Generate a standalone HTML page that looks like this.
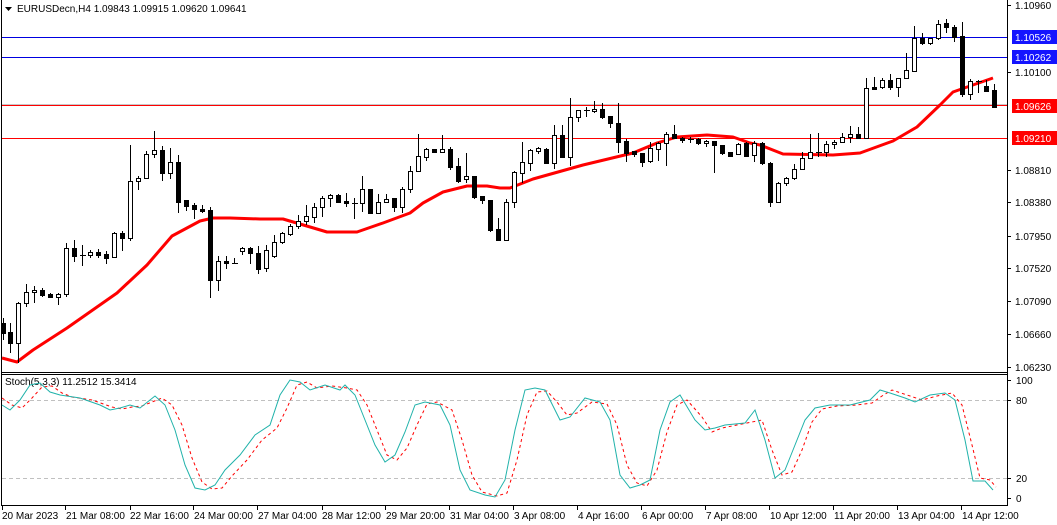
<!DOCTYPE html>
<html><head><meta charset="utf-8"><style>
html,body{margin:0;padding:0;background:#fff;width:1057px;height:525px;overflow:hidden}
svg{display:block}
text{font-family:"Liberation Sans",sans-serif;font-size:10px;fill:#000}
</style></head><body>
<svg width="1057" height="525" viewBox="0 0 1057 525" xmlns="http://www.w3.org/2000/svg">
<rect width="1057" height="525" fill="#fff"/>
<!-- horizontal levels -->
<g shape-rendering="crispEdges">
<line x1="1" y1="37.5" x2="1007" y2="37.5" stroke="#0000e0" stroke-width="1"/>
<line x1="1" y1="57.5" x2="1007" y2="57.5" stroke="#0000e0" stroke-width="1"/>
<line x1="1" y1="104.5" x2="1007" y2="104.5" stroke="#c8c8c8" stroke-width="1"/>
<line x1="1" y1="105.5" x2="1007" y2="105.5" stroke="#ff0000" stroke-width="1"/>
<line x1="1" y1="138.5" x2="1007" y2="138.5" stroke="#ff0000" stroke-width="1"/>
<!-- frame -->
<path d="M1.5 0V505.5H1007.5V0M1 372.5H1007M1 374.5H1007" stroke="#000" fill="none"/>
</g>
<!-- MA -->
<polyline fill="none" stroke="#ff0000" stroke-width="3" stroke-linejoin="round" points="2,358 17,362 33,350 67,328 117,293 147,265 172,236 200,221 213,218 230,218 260,219 283,219 300,224 327,232 357,232 383,223 410,213 423,203 443,192 467,186 487,186 500,188 510,188 533,179 583,165 633,153 657,143 677,137 707,135 733,137 750,143 760,145 783,154 833,155 860,153 893,141 917,127 940,105 953,92 970,86 993,78"/>
<g shape-rendering="crispEdges">
<!-- candles wicks -->
<path stroke="#000" stroke-width="1" fill="none" d="M3.5 318V340M10.5 323V353M18.5 302V363M26.5 284V307M34.5 286V303M42.5 288V297M50.5 293V298M58.5 293V305M66.5 243V297M74.5 240V262M82.5 245V266M90.5 250V258M98.5 249V258M106.5 251V264M114.5 232V258M122.5 231V251M130.5 145V241M138.5 176V190M146.5 151V179M154.5 131V158M162.5 146V181M170.5 148V179M178.5 155V213M186.5 200V211M194.5 203V219M202.5 205V213M210.5 207V298M218.5 256V291M226.5 256V269M234.5 258V263M242.5 247V255M250.5 247V264M258.5 246V274M266.5 245V272M274.5 235V258M282.5 232V244M290.5 224V236M298.5 215V229M306.5 205V225M314.5 203V223M322.5 196V217M330.5 194V207M338.5 194V203M346.5 193V207M354.5 198V219M362.5 176V212M370.5 189V213M378.5 194V213M386.5 194V203M394.5 198V212M402.5 187V213M410.5 166V193M418.5 134V171M426.5 148V161M434.5 149V153M442.5 135V153M450.5 147V170M458.5 158V183M466.5 153V183M474.5 176V199M482.5 196V204M490.5 200V232M498.5 218V241M506.5 199V241M514.5 171V208M522.5 142V183M530.5 149V171M538.5 147V154M546.5 148V164M554.5 125V169M562.5 125V158M570.5 98V166M578.5 110V122M586.5 107V117M594.5 101V113M602.5 103V119M610.5 116V128M618.5 103V153M626.5 139V162M634.5 151V157M642.5 153V167M650.5 142V163M658.5 142V161M666.5 132V166M674.5 125V139M682.5 137V143M690.5 137V143M698.5 138V145M706.5 140V147M714.5 141V173M722.5 145V155M730.5 152V157M738.5 143V155M746.5 142V157M754.5 141V162M762.5 142V165M770.5 162V207M778.5 182V203M786.5 177V186M794.5 164V180M802.5 152V170M810.5 134V159M818.5 133V157M826.5 141V157M834.5 140V149M842.5 133V143M850.5 126V143M858.5 127V139M866.5 78V139M874.5 77V90M882.5 78V89M890.5 74V90M898.5 78V97M906.5 53V79M914.5 26V72M922.5 33V45M930.5 38V45M938.5 20V40M946.5 19V33M954.5 25V42M962.5 22V97M970.5 79V100M978.5 80V93M986.5 80V92M994.5 84V107"/>
<!-- black bodies -->
<path stroke="#000" fill="#000" d="M1.5 323.5h4v10h-4zM8.5 332.5h4v11h-4zM40.5 290.5h4v5h-4zM48.5 294.5h4v3h-4zM72.5 248.5h4v8h-4zM96.5 252.5h4v3h-4zM104.5 254.5h4v4h-4zM120.5 233.5h4v5h-4zM160.5 150.5h4v23h-4zM176.5 162.5h4v40h-4zM184.5 200.5h4v6h-4zM192.5 205.5h4v4h-4zM200.5 209.5h4v2h-4zM208.5 210.5h4v70h-4zM224.5 261.5h4v2h-4zM248.5 248.5h4v5h-4zM256.5 253.5h4v16h-4zM336.5 195.5h4v7h-4zM344.5 201.5h4v2h-4zM368.5 189.5h4v24h-4zM392.5 198.5h4v9h-4zM432.5 149.5h4v3h-4zM448.5 149.5h4v18h-4zM456.5 166.5h4v15h-4zM472.5 176.5h4v21h-4zM480.5 196.5h4v4h-4zM488.5 200.5h4v30h-4zM496.5 229.5h4v11h-4zM544.5 149.5h4v14h-4zM560.5 135.5h4v22h-4zM600.5 109.5h4v8h-4zM608.5 116.5h4v7h-4zM616.5 123.5h4v19h-4zM624.5 141.5h4v12h-4zM632.5 151.5h4v3h-4zM640.5 153.5h4v9h-4zM672.5 134.5h4v4h-4zM680.5 138.5h4v2h-4zM696.5 139.5h4v4h-4zM712.5 141.5h4v4h-4zM720.5 145.5h4v8h-4zM728.5 152.5h4v4h-4zM744.5 143.5h4v13h-4zM760.5 143.5h4v20h-4zM768.5 163.5h4v39h-4zM856.5 134.5h4v4h-4zM872.5 87.5h4v2h-4zM888.5 80.5h4v7h-4zM920.5 38.5h4v5h-4zM944.5 23.5h4v4h-4zM952.5 27.5h4v10h-4zM960.5 36.5h4v58h-4zM984.5 86.5h4v5h-4zM992.5 90.5h4v17h-4z"/>
<!-- white bodies -->
<path stroke="#000" fill="#fff" d="M16.5 303.5h4v40h-4zM24.5 292.5h4v11h-4zM32.5 290.5h4v2h-4zM56.5 294.5h4v3h-4zM64.5 248.5h4v46h-4zM88.5 252.5h4v3h-4zM112.5 233.5h4v24h-4zM128.5 181.5h4v57h-4zM136.5 178.5h4v3h-4zM144.5 154.5h4v24h-4zM152.5 150.5h4v4h-4zM168.5 162.5h4v11h-4zM216.5 261.5h4v19h-4zM240.5 248.5h4v3h-4zM264.5 250.5h4v18h-4zM272.5 242.5h4v14h-4zM280.5 233.5h4v9h-4zM288.5 226.5h4v8h-4zM296.5 221.5h4v5h-4zM304.5 216.5h4v5h-4zM312.5 207.5h4v10h-4zM320.5 198.5h4v9h-4zM328.5 195.5h4v3h-4zM360.5 189.5h4v14h-4zM376.5 202.5h4v11h-4zM384.5 199.5h4v3h-4zM400.5 189.5h4v18h-4zM408.5 171.5h4v18h-4zM416.5 156.5h4v15h-4zM424.5 149.5h4v8h-4zM440.5 149.5h4v3h-4zM464.5 176.5h4v3h-4zM504.5 202.5h4v38h-4zM512.5 172.5h4v30h-4zM520.5 162.5h4v11h-4zM528.5 150.5h4v13h-4zM536.5 148.5h4v3h-4zM552.5 135.5h4v28h-4zM568.5 117.5h4v40h-4zM576.5 110.5h4v7h-4zM592.5 109.5h4v2h-4zM648.5 148.5h4v13h-4zM656.5 143.5h4v6h-4zM664.5 134.5h4v9h-4zM704.5 141.5h4v2h-4zM736.5 144.5h4v10h-4zM752.5 143.5h4v12h-4zM776.5 183.5h4v19h-4zM784.5 178.5h4v5h-4zM792.5 169.5h4v9h-4zM800.5 158.5h4v11h-4zM808.5 152.5h4v6h-4zM824.5 144.5h4v8h-4zM832.5 142.5h4v2h-4zM840.5 137.5h4v5h-4zM848.5 134.5h4v3h-4zM864.5 88.5h4v50h-4zM880.5 80.5h4v7h-4zM896.5 78.5h4v9h-4zM904.5 70.5h4v8h-4zM912.5 38.5h4v33h-4zM928.5 38.5h4v5h-4zM936.5 24.5h4v14h-4zM968.5 81.5h4v13h-4z"/>
<!-- dojis -->
<path stroke="#000" d="M80 255.5h6M232 263.5h6M352 203.5h6M584 110.5h6M688 139.5h6M816 152.5h6M976 81.5h6"/>
</g>
<!-- header -->
<path d="M5 7h7l-3.5 4z" fill="#000"/>
<text x="17" y="12">EURUSDecn,H4  1.09843 1.09915 1.09620 1.09641</text>
<!-- right axis -->
<g stroke="#000" shape-rendering="crispEdges"><path d="M1007 5.5h4M1007 72.5h4M1007 170.5h4M1007 202.5h4M1007 236.5h4M1007 268.5h4M1007 301.5h4M1007 334.5h4M1007 367.5h4M1007 380.5h4M1007 400.5h4M1007 478.5h4M1007 498.5h4"/></g>
<text x="1015" y="9">1.10960</text>
<rect x="1012" y="30" width="45" height="14" fill="#1414ff"/>
<text x="1015" y="41" style="fill:#fff">1.10526</text>
<rect x="1012" y="50" width="45" height="14" fill="#1414ff"/>
<text x="1015" y="61" style="fill:#fff">1.10262</text>
<text x="1015" y="76">1.10100</text>
<rect x="1012" y="99" width="45" height="14" fill="#ff0000"/>
<text x="1015" y="110" style="fill:#fff">1.09626</text>
<rect x="1012" y="131" width="45" height="14" fill="#ff0000"/>
<text x="1015" y="142" style="fill:#fff">1.09210</text>
<text x="1015" y="174">1.08810</text>
<text x="1015" y="206">1.08380</text>
<text x="1015" y="240">1.07950</text>
<text x="1015" y="272">1.07520</text>
<text x="1015" y="305">1.07090</text>
<text x="1015" y="338">1.06660</text>
<text x="1015" y="371">1.06230</text>
<!-- stoch -->
<text x="5" y="385">Stoch(5,3,3) 11.2512 15.3414</text>
<path d="M2 400.5H1007M2 478.5H1007" stroke="#c0c0c0" stroke-dasharray="4,3" shape-rendering="crispEdges"/>
<text x="1016" y="384">100</text>
<text x="1016" y="404">80</text>
<text x="1016" y="482">20</text>
<text x="1016" y="502">0</text>
<polyline fill="none" stroke="#ff0000" stroke-dasharray="3,3" points="2,398 12,405 22,408 32,398 42,387 52,386 62,393 72,397 92,400 112,407 122,409 132,407 142,406 152,402 162,398 172,405 182,425 192,458 202,482 212,489 222,488 232,476 247,460 262,440 277,428 287,408 297,385 307,382 317,388 332,386 347,388 357,390 367,405 377,430 387,455 397,460 407,448 417,425 427,404 437,402 452,410 462,440 472,475 482,492 497,496 507,493 517,460 527,415 537,392 547,391 557,402 567,415 577,413 592,402 607,404 617,425 627,465 637,483 647,486 657,470 667,432 677,405 687,400 702,417 712,432 722,428 737,425 752,422 762,420 772,450 782,475 792,472 802,450 812,422 822,409 837,406 857,405 872,403 882,396 892,390 907,395 922,400 937,396 952,393 962,405 972,445 980,478 990,480 996,487"/>
<polyline fill="none" stroke="#20b2aa" stroke-width="1" points="2,405 10,410 20,400 30,385 40,383 50,392 60,395 80,398 100,405 110,410 120,408 130,405 140,408 155,396 165,405 175,430 185,465 195,488 205,490 215,485 225,470 240,455 255,435 270,425 280,395 290,380 300,382 310,390 325,385 340,390 345,385 355,395 365,420 375,445 385,462 395,455 405,432 415,405 425,402 440,405 450,425 460,470 470,490 485,495 495,497 505,480 515,430 525,390 535,388 545,390 560,420 570,417 585,398 600,402 610,420 620,475 630,488 640,485 650,480 660,430 670,402 680,395 695,420 705,430 715,428 725,425 745,423 755,410 765,440 775,478 785,470 795,445 805,420 815,408 830,405 850,405 870,400 880,390 890,393 905,398 915,402 930,395 945,393 955,400 965,440 973,481 985,481 993,490"/>
<!-- bottom axis -->
<path stroke="#000" shape-rendering="crispEdges" d="M2.5 505V510M65.5 505V510M130.5 505V510M193.5 505V510M257.5 505V510M322.5 505V510M385.5 505V510M449.5 505V510M513.5 505V510M577.5 505V510M641.5 505V510M705.5 505V510M769.5 505V510M833.5 505V510M897.5 505V510M961.5 505V510"/>
<text x="2" y="519">20 Mar 2023</text>
<text x="66" y="519">21 Mar 08:00</text>
<text x="130" y="519">22 Mar 16:00</text>
<text x="194" y="519">24 Mar 00:00</text>
<text x="258" y="519">27 Mar 04:00</text>
<text x="322" y="519">28 Mar 12:00</text>
<text x="386" y="519">29 Mar 20:00</text>
<text x="450" y="519">31 Mar 04:00</text>
<text x="514" y="519">3 Apr 08:00</text>
<text x="578" y="519">4 Apr 16:00</text>
<text x="642" y="519">6 Apr 00:00</text>
<text x="706" y="519">7 Apr 08:00</text>
<text x="770" y="519">10 Apr 12:00</text>
<text x="834" y="519">11 Apr 20:00</text>
<text x="898" y="519">13 Apr 04:00</text>
<text x="962" y="519">14 Apr 12:00</text>
</svg>
</body></html>
